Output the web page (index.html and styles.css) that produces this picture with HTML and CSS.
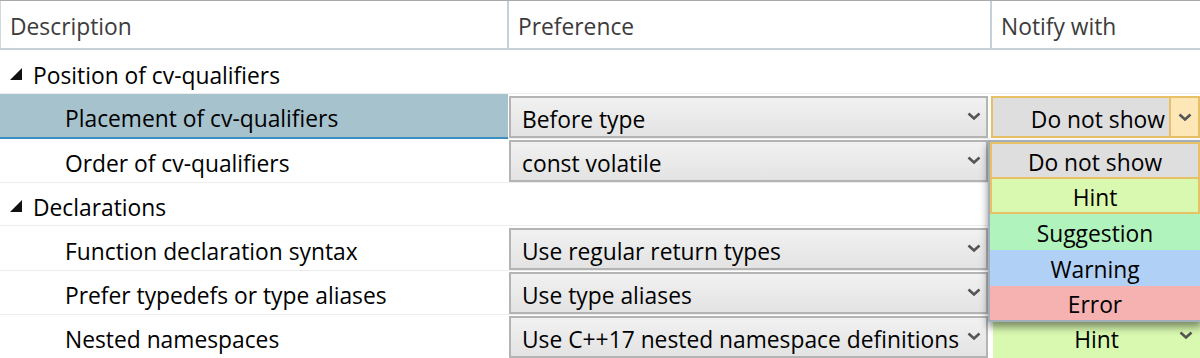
FILE: index.html
```html
<!DOCTYPE html>
<html>
  <head>
    <title>Inspection settings</title>
    <link rel="stylesheet" href="styles.css">
  </head>
  <body>
    <div class="table">
      <div class="head">
        <div class="hcell">Description</div>
        <div class="hcell">Preference</div>
        <div class="hcell">Notify with</div>
      </div>

      <div class="group">
        <svg class="tri" width="12" height="12" viewBox="0 0 12 12"><polygon points="12,0 12,12 0,12" /></svg>
        Position of cv-qualifiers
      </div>

      <div class="row selected">
        <div class="desc">Placement of cv-qualifiers</div>
        <div class="pref">
          <div class="combo">Before type
            <svg class="chev" width="14" height="9" viewBox="0 0 14 9"><path d="M1.5 1.5 L7 6.5 L12.5 1.5" /></svg>
          </div>
        </div>
        <div class="notify">
          <div class="sev-open">
            <span class="sev-text">Do not show</span>
            <span class="sev-btn">
              <svg class="chev" width="14" height="9" viewBox="0 0 14 9"><path d="M1.5 1.5 L7 6.5 L12.5 1.5" /></svg>
            </span>
          </div>
        </div>
      </div>

      <div class="row">
        <div class="desc">Order of cv-qualifiers</div>
        <div class="pref">
          <div class="combo">const volatile
            <svg class="chev" width="14" height="9" viewBox="0 0 14 9"><path d="M1.5 1.5 L7 6.5 L12.5 1.5" /></svg>
          </div>
        </div>
        <div class="notify"></div>
      </div>

      <div class="group">
        <svg class="tri" width="12" height="12" viewBox="0 0 12 12"><polygon points="12,0 12,12 0,12" /></svg>
        Declarations
      </div>

      <div class="row">
        <div class="desc">Function declaration syntax</div>
        <div class="pref">
          <div class="combo">Use regular return types
            <svg class="chev" width="14" height="9" viewBox="0 0 14 9"><path d="M1.5 1.5 L7 6.5 L12.5 1.5" /></svg>
          </div>
        </div>
        <div class="notify"></div>
      </div>

      <div class="row">
        <div class="desc">Prefer typedefs or type aliases</div>
        <div class="pref">
          <div class="combo">Use type aliases
            <svg class="chev" width="14" height="9" viewBox="0 0 14 9"><path d="M1.5 1.5 L7 6.5 L12.5 1.5" /></svg>
          </div>
        </div>
        <div class="notify"></div>
      </div>

      <div class="row">
        <div class="desc">Nested namespaces</div>
        <div class="pref">
          <div class="combo">Use C++17 nested namespace definitions
            <svg class="chev" width="14" height="9" viewBox="0 0 14 9"><path d="M1.5 1.5 L7 6.5 L12.5 1.5" /></svg>
          </div>
        </div>
        <div class="notify">
          <div class="sev hint">Hint
            <svg class="chev" width="14" height="9" viewBox="0 0 14 9"><path d="M1.5 1.5 L7 6.5 L12.5 1.5" /></svg>
          </div>
        </div>
      </div>
    </div>

    <div class="popup">
      <div class="item current">Do not show</div>
      <div class="item hint hover">Hint</div>
      <div class="item suggestion">Suggestion</div>
      <div class="item warning">Warning</div>
      <div class="item error">Error</div>
    </div>
  </body>
</html>
```

FILE: styles.css
```css
body {
  margin: 0;
  padding: 0;
  background-color: #fff;
  color: #000;
  font-family: "Open Sans", "Noto Sans", sans-serif;
  font-size: 22.8px;
  overflow: hidden;
}

.table {
  width: 1200px;
}

.head {
  display: grid;
  grid-template-columns: 507px 483px 210px;
  height: 50px;
  box-sizing: border-box;
  border-top: 1px solid #a9a9a9;
  border-bottom: 2px solid #c6d1d7;
}

.hcell {
  display: flex;
  align-items: center;
  padding-left: 9px;
  padding-top: 4px;
  color: #3c3c3c;
  border-left: 2px solid #c6d1d7;
}

.hcell:first-child {
  border-left: 1px solid #cfd8dc;
}

.group {
  display: flex;
  align-items: center;
  height: 44px;
  box-sizing: border-box;
  padding-left: 10px;
  padding-top: 7px;
  border-bottom: 1px solid #ececec;
}

.tri {
  margin-right: 11px;
  margin-top: -2px;
}

.tri polygon {
  fill: #111;
}

.row {
  display: grid;
  grid-template-columns: 508px 482px 210px;
  height: 44px;
  box-sizing: border-box;
}

.desc {
  display: flex;
  align-items: center;
  padding-left: 65px;
  padding-top: 6px;
  border-bottom: 1px solid #ececec;
}

.row.selected .desc {
  background-color: #a6c2cd;
  border-bottom: 2px solid #3a8ec0;
}

.pref {
  padding: 2px 2px 0 1px;
  border-bottom: 1px solid #ececec;
}

.combo {
  display: flex;
  align-items: center;
  justify-content: space-between;
  height: 42px;
  box-sizing: border-box;
  padding: 4px 5px 0 11px;
  border: 2px solid #b4b4b4;
  background: linear-gradient(#f1f1f1, #e3e3e3);
}

.combo .chev {
  margin-top: -6px;
}

.chev path {
  fill: none;
  stroke: #555;
  stroke-width: 2.6;
}

.notify {
  padding: 2px 0 0 1px;
}

.sev-open {
  display: flex;
  height: 42px;
  box-sizing: border-box;
  border: 2px solid #e8c066;
  background-color: #dedede;
}

.sev-text {
  flex: 1;
  display: flex;
  align-items: center;
  justify-content: flex-end;
  padding: 4px 4px 0 0;
}

.sev-btn {
  display: flex;
  align-items: center;
  justify-content: center;
  width: 27px;
  background-color: #fee7b6;
  border-left: 2px solid #e8c066;
}

.sev {
  position: relative;
  display: flex;
  align-items: center;
  justify-content: center;
  height: 42px;
  margin-left: 2px;
  padding-top: 4px;
  box-sizing: border-box;
}

.sev .chev {
  position: absolute;
  right: 7px;
  top: 15px;
}

.hint {
  background-color: #d9f9b0;
}

.suggestion {
  background-color: #b1f3bd;
}

.warning {
  background-color: #b1d0f6;
}

.error {
  background-color: #f6b1b1;
}

/* open dropdown list of the "Notify with" combo */
.popup {
  position: absolute;
  left: 988px;
  top: 140px;
  width: 214px;
  box-sizing: border-box;
  border: 2px solid #a0afbb;
  box-shadow: 0 5px 8px rgba(0, 0, 0, 0.45);
  background-color: #fff;
}

.item {
  display: flex;
  align-items: center;
  justify-content: center;
  height: 36px;
  box-sizing: border-box;
  padding-top: 3px;
}

.item.current {
  height: 37px;
  background-color: #dedede;
  border: 2px solid #e8c066;
}

.item.hover {
  height: 35px;
  border: 2px solid #e8c066;
  border-top: none;
}

.item.error {
  height: 34px;
}
```
